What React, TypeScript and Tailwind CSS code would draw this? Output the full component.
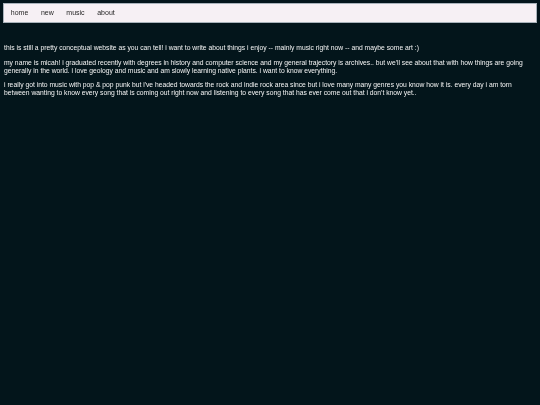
const LINKS = ['home', 'new', 'music', 'about']

export default function App() {
  return (
    <div className="min-h-[405px] bg-[#03151b] px-[3px] pt-[3px] font-['Liberation_Sans',Arial,sans-serif] text-[7px] leading-[8px] antialiased [will-change:transform]">
      {/* Nav */}
      <nav className="flex h-[20px] items-center border border-[#a9b3bb] bg-[#f6f0f4] px-[0.5px]">
        {LINKS.map((l) => (
          <a key={l} className="px-[6.3px] text-[#262626]">
            {l}
          </a>
        ))}
      </nav>

      {/* Content */}
      <div className="mt-[20.5px] px-[1px] text-[6.75px] text-[#f4f4f4]">
        <p>
          this is still a pretty conceptual website as you can tell! i want to write about things i enjoy -- mainly
          music right now -- and maybe some art :)
        </p>
        <p className="mt-[7px]">
          my name is micah! i graduated recently with degrees in history and computer science and my general
          trajectory is archives.. but we'll see about that with how things are going generally in the world. i love
          geology and music and am slowly learning native plants. i want to know everything.
        </p>
        <p className="mt-[6.5px]">
          i really got into music with pop &amp; pop punk but i've headed towards the rock and indie rock area since
          but i love many many genres you know how it is. every day i am torn between wanting to know every song that
          is coming out right now and listening to every song that has ever come out that i don't know yet..
        </p>
      </div>
    </div>
  )
}
